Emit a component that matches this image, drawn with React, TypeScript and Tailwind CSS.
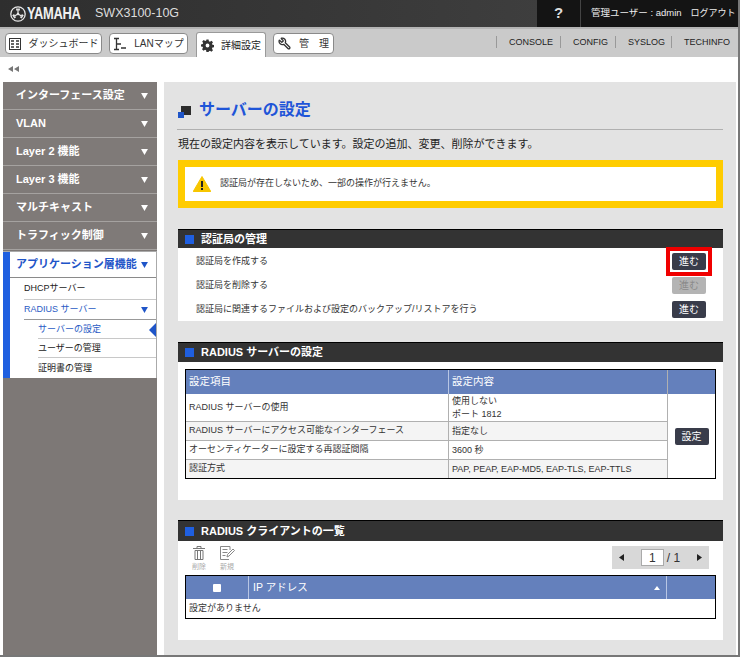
import React from "react";
import { Wrench } from "lucide-react";

const F = { fontFamily: '"Liberation Sans","Noto Sans CJK JP",sans-serif' };

function Down({ c = "#fff", s = 7 }: { c?: string; s?: number }) {
  return (
    <svg width={s} height={s - 1} viewBox="0 0 8 7"><path d="M0 0h8L4 7z" fill={c} /></svg>
  );
}

function Logo() {
  return (
    <svg width="16" height="16" viewBox="0 0 20 20" fill="none" stroke="#e8e8e8">
      <circle cx="10" cy="10" r="9" strokeWidth="1.6" />
      <g strokeWidth="1.5">
        <path d="M10 10V3M8.4 3v2.6M11.6 3v2.6" />
        <path d="M10 10L16 13.5M16.8 12.1l-2.3-1.3M15.2 14.9l-2.3-1.3" />
        <path d="M10 10L4 13.5M3.2 12.1l2.3-1.3M4.8 14.9l2.3-1.3" />
      </g>
      <circle cx="10" cy="10" r="1.6" fill="#e8e8e8" stroke="none" />
    </svg>
  );
}

function Tab({ icon, label, active, w }: { icon: React.ReactNode; label: string; active?: boolean; w: string }) {
  return (
    <div
      className={
        active
          ? `${w} h-[25px] mt-[3px] flex items-center justify-center gap-[7px] bg-white border border-b-0 border-[#9a9a9a] rounded-t-[3px] text-[10px] text-[#222]`
          : `${w} h-[21px] mt-[4px] flex items-center justify-center gap-[8px] bg-white border border-[#8a8a8a] rounded-[4px] text-[10px] text-[#333]`
      }
    >
      {icon}
      <span>{label}</span>
    </div>
  );
}

function SideItem({ label }: { label: string }) {
  return (
    <div className="h-[28px] border-b border-[#a5a2a0] bg-[#7f7a78] flex items-center justify-between pl-[13px] pr-[9px] text-white font-bold text-[11px]">
      <span>{label}</span>
      <Down />
    </div>
  );
}

function SectionHead({ title, h = "h-[20px]" }: { title: string; h?: string }) {
  return (
    <div className={`${h} bg-[#333333] border-t border-black flex items-center pl-[7px] gap-[7px] text-white font-bold text-[11px]`}>
      <span className="w-[9px] h-[9px] bg-[#1f5fe0]" />
      <span>{title}</span>
    </div>
  );
}

function Btn({ label, disabled, w = "w-[34px]" }: { label: string; disabled?: boolean; w?: string }) {
  return (
    <div
      className={`${w} h-[17px] rounded-[2px] flex items-center justify-center text-[10px] ${
        disabled ? "bg-[#b4b4b4] text-[#8a8a8a]" : "bg-[#393c4a] text-white"
      }`}
    >
      {label}
    </div>
  );
}

function ActionRow({ label, children, h }: { label: string; children: React.ReactNode; h: string }) {
  return (
    <div className={`${h} flex items-center justify-between pl-[18px] pr-[17px] text-[9px] text-[#333]`}>
      <span className="mt-[2px]">{label}</span>
      {children}
    </div>
  );
}

function Row({ a, b, h, alt, last }: { a: string; b: React.ReactNode; h: string; alt?: boolean; last?: boolean }) {
  return (
    <div className={`${h} flex ${last ? "" : "border-b border-[#b0b0b0]"} ${alt ? "bg-[#f4f4f4]" : "bg-white"}`}>
      <div className="w-[263px] flex items-center pl-[3px] border-r border-[#b0b0b0]">{a}</div>
      <div className="flex-1 flex flex-col justify-center pl-[3px] leading-[13px]">{b}</div>
    </div>
  );
}

export default function App() {
  return (
    <div style={F} className="w-[740px] h-[657px] overflow-hidden bg-white flex flex-col border-b-2 border-r-2 border-[#777]">
      <header className="h-[27px] shrink-0 flex bg-gradient-to-r from-[#2e2e2e] to-[#444]">
        <div className="flex-1 flex items-center pl-[10px]">
          <Logo />
          <span className="ml-px w-[55px] text-[#f0f0f0] font-bold text-[17px] origin-left scale-x-[0.76] tracking-tight">YAMAHA</span>
          <span className="ml-[13px] text-[#ddd] text-[12.5px]">SWX3100-10G</span>
        </div>
        <div className="w-[44px] bg-[#141414] flex items-center justify-center border-r border-[#444] text-[#ddd] font-bold text-[15px]">?</div>
        <div className="w-[157px] bg-[#141414] flex items-center text-[9.5px] text-[#eee] pl-[10px] whitespace-nowrap">
          <span>管理ユーザー : admin</span>
          <span className="ml-[9px] text-[9px]">ログアウト</span>
        </div>
      </header>

      <nav className="h-[30px] shrink-0 border-t-2 border-[#b4b4b4] bg-[#cacaca] flex pl-[5px] gap-[7px]">
        <Tab
          w="w-[97px]"
          label="ダッシュボード"
          icon={
            <svg width="12" height="12" viewBox="0 0 12 12" fill="none" stroke="#333">
              <rect x="0.5" y="0.5" width="11" height="11" />
              <path d="M2 3h3M2 6h3M2 9h3M7 3h3M7 6h3M7 9h3" strokeWidth="1.6" />
            </svg>
          }
        />
        <Tab
          w="w-[79px]"
          label="LANマップ"
          icon={
            <svg width="13" height="14" viewBox="0 0 13 14" fill="none" stroke="#333">
              <path d="M1 1.5h5M1 12.5h5M3.5 1.5v11M3.5 7H8M8 11h5" strokeWidth="1.3" />
            </svg>
          }
        />
        <div className="ml-[1px]">
          <Tab
            active
            w="w-[70px]"
            label="詳細設定"
            icon={
              <svg width="13" height="13" viewBox="0 0 24 24" fill="#333">
                <path d="M10 1h4l.6 3.2 2 .8 2.7-1.8 2.8 2.8-1.8 2.7.8 2 3.2.6v4l-3.2.6-.8 2 1.8 2.7-2.8 2.8-2.7-1.8-2 .8L14 24h-4l-.6-3.2-2-.8-2.7 1.8-2.8-2.8 1.8-2.7-.8-2L0 14v-4l3.2-.6.8-2L2.2 4.7 5 1.9l2.7 1.8 2-.8zM12 8.5a3.5 3.5 0 100 7 3.5 3.5 0 000-7z" />
              </svg>
            }
          />
        </div>
        <Tab
          w="w-[61px]"
          label="管　理"
          icon={<Wrench size={13} color="#333" strokeWidth={2.4} className="-rotate-90" />}
        />
        <div className="flex-1 flex justify-end items-center pr-[8px] text-[9px] text-[#222] pb-[2px]">
          <span className="border-l border-[#999] h-[12px] leading-[12px] pl-[12px] pr-[7px]">CONSOLE</span>
          <span className="border-l border-[#999] h-[12px] leading-[12px] pl-[12px] pr-[7px]">CONFIG</span>
          <span className="border-l border-[#999] h-[12px] leading-[12px] pl-[12px] pr-[6px]">SYSLOG</span>
          <span className="border-l border-[#999] h-[12px] leading-[12px] pl-[12px]">TECHINFO</span>
        </div>
      </nav>

      <div className="h-[25px] shrink-0 flex items-center pl-[8px] pb-[1px] gap-0">
        <svg width="11" height="6" viewBox="0 0 11 6" fill="#777"><path d="M5 0v6L0 3zM11 0v6L6 3z" /></svg>
      </div>

      <div className="flex-1 min-h-0 flex pl-[3px] gap-[7px]">
        <aside className="w-[154px] bg-[#7d7876] flex flex-col">
          <SideItem label="インターフェース設定" />
          <SideItem label="VLAN" />
          <SideItem label="Layer 2 機能" />
          <SideItem label="Layer 3 機能" />
          <SideItem label="マルチキャスト" />
          <SideItem label="トラフィック制御" />
          <div className="mt-px h-[127px] bg-[#1f5fe0] pl-[7px] border-t border-[#aaa] border-r">
            <div className="h-full bg-white flex flex-col">
              <div className="h-[26px] border-b border-[#8a8a8a] flex items-center pl-[6px] gap-[4px] text-[#1f55c8] font-bold text-[11px]">
                <span>アプリケーション層機能</span>
                <Down c="#1f55c8" />
              </div>
              <div className="pl-[14px] h-[22px]">
                <div className="h-full border-b border-[#c8c8c8] flex items-center text-[9px] text-[#222]">DHCPサーバー</div>
              </div>
              <div className="pl-[14px] h-[20px]">
                <div className="h-full border-b border-[#999] flex items-center justify-between pr-[8px] text-[9px] text-[#2a5bc4]">
                  <span>RADIUS サーバー</span>
                  <Down c="#1f55c8" />
                </div>
              </div>
              <div className="pl-[28px] h-[19px]">
                <div className="h-full border-b border-[#c8c8c8] flex items-center justify-between text-[9px] text-[#2a5bc4] pt-px">
                  <span>サーバーの設定</span>
                  <svg width="7" height="14" viewBox="0 0 7 14" fill="#1f55c8"><path d="M7 0v14L0 7z" /></svg>
                </div>
              </div>
              <div className="pl-[28px] h-[19px]">
                <div className="h-full border-b border-[#c8c8c8] flex items-center text-[9px] text-[#222] pt-px">ユーザーの管理</div>
              </div>
              <div className="pl-[28px] flex-1 flex items-center text-[9px] text-[#222] pt-px">証明書の管理</div>
            </div>
          </div>
        </aside>

        <main className="w-[572px] bg-[#e3e3e3] pl-[13px] pr-[13px] flex flex-col text-[#222]">
          <div className="h-[48px] flex items-center gap-[8px] border-b border-[#b0b0b0] pt-[9px] pl-px">
            <svg width="13" height="12" viewBox="0 0 13 12" className="mt-[3px]">
              <rect x="3" y="0" width="10" height="9" fill="#2c2c2c" />
              <rect x="0" y="6" width="6" height="6" fill="#1f55c8" />
            </svg>
            <span className="text-[#1f55d8] font-bold text-[16px]">サーバーの設定</span>
          </div>
          <div className="h-[29px] flex items-center text-[11px] pl-px">現在の設定内容を表示しています。設定の追加、変更、削除ができます。</div>
          <div className="ml-px mt-px h-[48px] border-[7px] border-[#ffcc00] bg-white flex items-center pl-[8px] gap-[9px] text-[9px] text-[#333]">
            <svg width="18" height="16" viewBox="0 0 18 16">
              <path d="M9 .5L17.8 15.5H.2z" fill="#f7c600" stroke="#f7c600" strokeLinejoin="round" />
              <rect x="8" y="5" width="2" height="6" fill="#222" />
              <rect x="8" y="12" width="2" height="2" fill="#222" />
            </svg>
            <span>認証局が存在しないため、一部の操作が行えません。</span>
          </div>

          <section className="mt-[21px] ml-px h-[92px] bg-white flex flex-col">
            <SectionHead title="認証局の管理" />
            <div className="relative flex-1 flex flex-col pt-[1px]">
              <ActionRow h="h-[24px]" label="認証局を作成する">
                <div className="relative">
                  <div className="absolute -left-[6px] -top-[6px] w-[46px] h-[29px] border-[4px] border-[#f00000]" />
                  <Btn label="進む" />
                </div>
              </ActionRow>
              <ActionRow h="h-[24px]" label="認証局を削除する"><Btn label="進む" disabled /></ActionRow>
              <ActionRow h="h-[24px]" label="認証局に関連するファイルおよび設定のバックアップ/リストアを行う"><Btn label="進む" /></ActionRow>
            </div>
          </section>

          <section className="mt-[21px] ml-px h-[158px] bg-white flex flex-col">
            <SectionHead title="RADIUS サーバーの設定" />
            <div className="mx-[7px] mt-[7px] h-[110px] border border-black flex text-[9px] text-[#333]">
              <div className="w-[481px] flex flex-col">
                <div className="h-[24px] bg-[#6480bc] flex text-white text-[10.5px]">
                  <div className="w-[263px] flex items-center pl-[3px] border-r border-[#b8c6e4]">設定項目</div>
                  <div className="flex-1 flex items-center pl-[3px]">設定内容</div>
                </div>
                <Row h="h-[28px]" a="RADIUS サーバーの使用" b={<><span>使用しない</span><span>ポート 1812</span></>} />
                <Row h="h-[19px]" alt a="RADIUS サーバーにアクセス可能なインターフェース" b="指定なし" />
                <Row h="h-[19px]" a="オーセンティケーターに設定する再認証間隔" b="3600 秒" />
                <Row h="flex-1" alt last a="認証方式" b="PAP, PEAP, EAP-MD5, EAP-TLS, EAP-TTLS" />
              </div>
              <div className="flex-1 flex flex-col border-l border-[#b0b0b0]">
                <div className="h-[24px] bg-[#6480bc]" />
                <div className="flex-1 flex items-center justify-center"><Btn label="設定" /></div>
              </div>
            </div>
          </section>

          <section className="mt-[20px] ml-px h-[120px] bg-white flex flex-col">
            <SectionHead title="RADIUS クライアントの一覧" h="h-[21px]" />
            <div className="h-[34px] flex items-start justify-between pl-[13px] pr-[14px] pt-[5px]">
              <div className="flex gap-[12px] text-[7px] text-[#aaa] leading-[9px]">
                <div className="flex flex-col items-center w-[16px]">
                  <svg width="12" height="14" viewBox="0 0 12 14" fill="none" stroke="#777">
                    <path d="M0 2.5h12M4 2V.5h4V2M2 4.5h8V13.5H2zM4.5 5v8M7.5 5v8" />
                  </svg>
                  <span className="mt-[2px]">削除</span>
                </div>
                <div className="flex flex-col items-center w-[16px]">
                  <svg width="15" height="14" viewBox="0 0 15 14" fill="none" stroke="#888">
                    <path d="M10 4V.5H.5v13H9M2.5 3.5h5M2.5 6.5h5M2.5 9.5h3M7 11l.5-2.5L13 3l1.5 1.5L9 10z" />
                  </svg>
                  <span className="mt-[2px]">新規</span>
                </div>
              </div>
              <div className="w-[97px] h-[23px] bg-[#d8d8d8] flex items-center justify-between px-[7px] text-[12px] text-[#333]">
                <svg width="5" height="7" viewBox="0 0 5 7" fill="#222"><path d="M5 0v7L0 3.5z" /></svg>
                <div className="flex items-center gap-[3px]">
                  <span className="w-[23px] h-[17px] bg-white border border-[#aaa] flex items-center justify-center">1</span>
                  <span>/ 1</span>
                </div>
                <svg width="5" height="7" viewBox="0 0 5 7" fill="#222"><path d="M0 0v7l5-3.5z" /></svg>
              </div>
            </div>
            <div className="mx-[7px] h-[44px] border border-black flex flex-col text-[9px] text-[#333]">
              <div className="h-[23px] bg-[#6480bc] flex text-white text-[10.5px]">
                <div className="w-[63px] flex items-center justify-center border-r border-[#b8c6e4]">
                  <span className="w-[8px] h-[8px] bg-white rounded-[1px]" />
                </div>
                <div className="w-[418px] flex items-center justify-between pl-[4px] pr-[6px] border-r border-[#b8c6e4]">
                  <span>IP アドレス</span>
                  <svg width="6" height="4" viewBox="0 0 6 4" fill="#fff"><path d="M0 4h6L3 0z" /></svg>
                </div>
              </div>
              <div className="flex-1 flex items-center pl-[3px]">設定がありません</div>
            </div>
          </section>
        </main>
      </div>
    </div>
  );
}
